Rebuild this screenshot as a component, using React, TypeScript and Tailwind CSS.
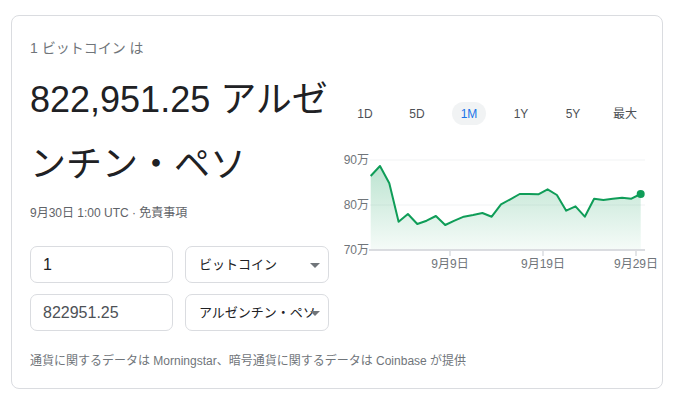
const FONT = '"Liberation Sans", Arial, "Noto Sans CJK JP", sans-serif'

const ys = [26, 16, 33.3, 71.7, 64, 74, 70.7, 66, 75, 70.7, 66.7, 65, 63, 66.7, 54.3, 49.3, 44, 44, 44.3, 39.3, 45, 60.7, 56.3, 66.7, 48.7, 50, 48.7, 47.7, 48.7, 44]
const pts = ys.map((y, i) => [31.7 + i * 9.31, y] as const)
const line = pts.map(([x, y], i) => `${i ? "L" : "M"}${x.toFixed(1)},${y}`).join(" ")
const last = pts[pts.length - 1]
const area = `${line} L${last[0].toFixed(1)},100 L${pts[0][0]},100 Z`

const tabs = ["1D", "5D", "1M", "1Y", "5Y", "最大"]

function Chart() {
  return (
    <svg width="312" height="122" className="block mt-[25px] overflow-visible" style={{ fontFamily: FONT }}>
      <defs>
        <linearGradient id="fill" x1="0" y1="0" x2="0" y2="1">
          <stop offset="0" stopColor="#0f9d58" stopOpacity="0.28" />
          <stop offset="1" stopColor="#0f9d58" stopOpacity="0.04" />
        </linearGradient>
      </defs>
      <line x1="31" y1="10" x2="306" y2="10" stroke="#f1f3f4" strokeWidth="1" />
      <line x1="31" y1="55" x2="306" y2="55" stroke="#f1f3f4" strokeWidth="1" />
      <path d={area} fill="url(#fill)" />
      <line x1="30" y1="100" x2="306" y2="100" stroke="#dadce0" strokeWidth="2" />
      {[111, 204, 297].map((x) => (
        <line key={x} x1={x} y1="100" x2={x} y2="106" stroke="#dadce0" strokeWidth="1.5" />
      ))}
      <path d={line} fill="none" stroke="#0f9d58" strokeWidth="2" strokeLinejoin="round" />
      <circle cx={last[0]} cy={last[1]} r="4" fill="#0f9d58" />
      <g fill="#70757a" fontSize="12">
        <text x="30" y="14" textAnchor="end">90万</text>
        <text x="30" y="59" textAnchor="end">80万</text>
        <text x="30" y="104" textAnchor="end">70万</text>
        <text x="111" y="118" textAnchor="middle">9月9日</text>
        <text x="204" y="118" textAnchor="middle">9月19日</text>
        <text x="297" y="118" textAnchor="middle">9月29日</text>
      </g>
    </svg>
  )
}

function Select({ label }: { label: string }) {
  return (
    <div className="relative w-[144px] h-[37px] border border-[#dadce0] rounded-[7px] flex items-center">
      <div className="pl-[13px] pr-[20px] overflow-hidden whitespace-nowrap text-[13px] text-[#202124]">{label}</div>
      <div className="absolute right-[8px] top-[16px] w-0 h-0 border-l-[5px] border-r-[5px] border-t-[5px] border-l-transparent border-r-transparent border-t-[#70757a]" />
    </div>
  )
}

export default function App() {
  return (
    <div className="w-[679px] h-[400px] bg-white pt-[15px] pl-[11px]" style={{ fontFamily: FONT }}>
      <div className="w-[652px] h-[374px] border border-[#dadce0] rounded-[8px] flex flex-col pl-[18px]">
        <div className="flex">
          {/* left */}
          <div className="w-[309px] pt-[24px]">
            <div className="text-[14px] leading-[17px] text-[#70757a]">1 ビットコイン は</div>
            <div className="mt-[10px] text-[36px] leading-[65px] text-[#202124]">822,951.25 アルゼンチン・ペソ</div>
            <div className="mt-[8px] text-[12px] leading-[16px] text-[#5f6368]">9月30日 1:00 UTC · 免責事項</div>
            <div className="mt-[25px] flex flex-col gap-[11px]">
              <div className="flex gap-[12px]">
                <div className="w-[143px] h-[37px] border border-[#dadce0] rounded-[7px] flex items-center pl-[12px] text-[16px] text-[#202124]">1</div>
                <Select label="ビットコイン" />
              </div>
              <div className="flex gap-[12px]">
                <div className="w-[143px] h-[37px] border border-[#dadce0] rounded-[7px] flex items-center pl-[12px] text-[16px] text-[#4d5156]">822951.25</div>
                <Select label="アルゼンチン・ペソ" />
              </div>
            </div>
          </div>
          {/* right */}
          <div className="w-[312px] pt-[86px]">
            <div className="flex">
              {tabs.map((t) => (
                <div key={t} className="w-[52px] flex justify-center">
                  <div
                    className={
                      t === "1M"
                        ? "h-[23px] w-[34px] rounded-full bg-[#f1f3f4] flex items-center justify-center text-[12px] text-[#1a73e8]"
                        : "h-[23px] flex items-center justify-center text-[12px] text-[#4d5156]"
                    }
                  >
                    {t}
                  </div>
                </div>
              ))}
            </div>
            <Chart />
          </div>
        </div>
        <div className="mt-[22px] text-[12px] leading-[16px] text-[#70757a]">
          通貨に関するデータは Morningstar、暗号通貨に関するデータは Coinbase が提供
        </div>
      </div>
    </div>
  )
}
